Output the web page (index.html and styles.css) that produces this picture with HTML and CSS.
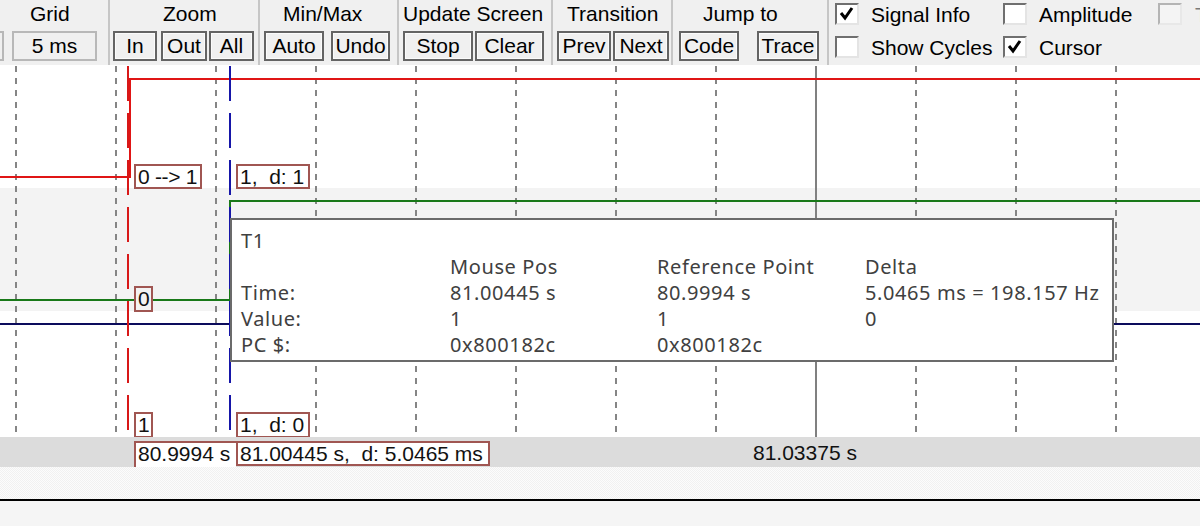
FILE: index.html
```html
<!DOCTYPE html>
<html>
<head>
<meta charset="utf-8">
<link rel="stylesheet" href="styles.css">
</head>
<body>
<div class="app">
  <div class="toolbar">
    <div class="group g-stub"><div class="stub-field"></div></div>
    <div class="group g-grid">
      <div class="glabel">Grid</div>
      <div class="gbtns"><div class="field">5 ms</div></div>
    </div>
    <div class="sep"></div>
    <div class="group g-zoom">
      <div class="glabel">Zoom</div>
      <div class="gbtns"><button class="btn b-in">In</button><button class="btn b-out">Out</button><button class="btn b-all">All</button></div>
    </div>
    <div class="sep"></div>
    <div class="group g-minmax">
      <div class="glabel">Min/Max</div>
      <div class="gbtns"><button class="btn b-auto">Auto</button><button class="btn b-undo">Undo</button></div>
    </div>
    <div class="sep"></div>
    <div class="group g-update">
      <div class="glabel">Update Screen</div>
      <div class="gbtns"><button class="btn b-stop">Stop</button><button class="btn b-clear">Clear</button></div>
    </div>
    <div class="sep"></div>
    <div class="group g-trans">
      <div class="glabel">Transition</div>
      <div class="gbtns"><button class="btn b-prev">Prev</button><button class="btn b-next">Next</button></div>
    </div>
    <div class="sep"></div>
    <div class="group g-jump">
      <div class="glabel">Jump to</div>
      <div class="gbtns"><button class="btn b-code">Code</button><button class="btn b-trace">Trace</button></div>
    </div>
    <div class="sep"></div>
    <div class="checks">
      <label class="chk"><span class="box"><svg width="20" height="18" viewBox="0 0 20 18"><polyline points="4,8 8,13 15,3" fill="none" stroke="#000" stroke-width="3"/></svg></span>Signal Info</label>
      <label class="chk"><span class="box"></span>Amplitude</label>
      <label class="chk"><span class="box box-dis"></span><span class="dis">T</span></label>
      <label class="chk"><span class="box"></span>Show Cycles</label>
      <label class="chk"><span class="box"><svg width="20" height="18" viewBox="0 0 20 18"><polyline points="4,8 8,13 15,3" fill="none" stroke="#000" stroke-width="3"/></svg></span>Cursor</label>
    </div>
  </div>

  <div class="wave">
    <div class="row r1"></div>
    <div class="row r2"></div>
    <div class="row r3"></div>
    <svg class="lines" width="1200" height="372" viewBox="0 0 1200 372">
      <g stroke="#858585" stroke-width="2" stroke-dasharray="6 6">
        <line x1="16" y1="1" x2="16" y2="372"/>
        <line x1="116" y1="1" x2="116" y2="372"/>
        <line x1="216" y1="1" x2="216" y2="372"/>
        <line x1="316" y1="1" x2="316" y2="372"/>
        <line x1="416" y1="1" x2="416" y2="372"/>
        <line x1="516" y1="1" x2="516" y2="372"/>
        <line x1="616" y1="1" x2="616" y2="372"/>
        <line x1="716" y1="1" x2="716" y2="372"/>
        <line x1="916" y1="1" x2="916" y2="372"/>
        <line x1="1016" y1="1" x2="1016" y2="372"/>
        <line x1="1116" y1="1" x2="1116" y2="372"/>
      </g>
      <line x1="816" y1="1" x2="816" y2="372" stroke="#808080" stroke-width="2"/>
      <!-- signal 1 (red) -->
      <polyline points="0,112 130,112 130,14 1200,14" fill="none" stroke="#e01515" stroke-width="2"/>
      <!-- signal 2 (green) -->
      <polyline points="0,235 230,235 230,136 1200,136" fill="none" stroke="#187818" stroke-width="2"/>
      <!-- signal 3 (navy) -->
      <line x1="0" y1="259" x2="1200" y2="259" stroke="#0c0c5c" stroke-width="2"/>
      <!-- cursors -->
      <line x1="128" y1="1" x2="128" y2="372" stroke="#d81818" stroke-width="2" stroke-dasharray="35 12"/>
      <line x1="230" y1="1" x2="230" y2="372" stroke="#1616a8" stroke-width="2" stroke-dasharray="35 12"/>
    </svg>

    <div class="lbl l-trans">0 --&gt; 1</div>
    <div class="lbl l-d1">1,&nbsp; d: 1</div>
    <div class="lbl lbl-gray l-zero">0</div>
    <div class="lbl l-one">1</div>
    <div class="lbl l-d0">1,&nbsp; d: 0</div>

    <div class="tip">
      <div class="tip-title">T1</div>
      <div class="tip-grid">
        <span></span><span>Mouse Pos</span><span>Reference Point</span><span>Delta</span>
        <span>Time:</span><span>81.00445 s</span><span>80.9994 s</span><span>5.0465 ms = 198.157 Hz</span>
        <span>Value:</span><span>1</span><span>1</span><span>0</span>
        <span>PC $:</span><span>0x800182c</span><span>0x800182c</span><span></span>
      </div>
    </div>
  </div>

  <div class="axis">
    <div class="ax ax1">80.9994 s</div>
    <div class="ax ax2">81.00445 s,&nbsp; d: 5.0465 ms</div>
    <div class="ax3">81.03375 s</div>
  </div>
  <div class="dots"></div>
  <div class="hline"></div>
  <div class="status"></div>
</div>
</body>
</html>
```
FILE: styles.css
```css
* { box-sizing: border-box; margin: 0; padding: 0; }
html, body { width: 1200px; height: 526px; overflow: hidden; }
body {
  background: #f0f0f0;
  font-family: "Liberation Sans", Arial, sans-serif;
  font-size: 21px;
  color: #000;
}
.app { display: flex; flex-direction: column; width: 1200px; height: 526px; }

/* ---------- toolbar ---------- */
.toolbar { display: flex; height: 65px; background: #f0f0f0; flex: none; }
.group { display: flex; flex-direction: column; height: 65px; flex: none; }
.glabel { height: 31px; line-height: 28px; white-space: nowrap; }
.gbtns { display: flex; height: 30px; }
.sep { width: 2px; height: 65px; background: #c6c6c6; flex: none; }

.btn {
  height: 30px;
  border: 2px solid #646464;
  box-shadow: inset 0 0 0 1px #fbfbfb;
  background: #f0f0f0;
  font: inherit;
  color: #000;
  line-height: 24px;
  text-align: center;
  padding: 0;
  flex: none;
}

.g-stub { width: 9px; }
.stub-field { width: 4px; height: 30px; margin-top: 31px; border: 2px solid #b8b8b8; border-left: none; }

.g-grid { width: 99px; }
.g-grid .glabel { padding-left: 21px; }
.field {
  width: 85px; height: 30px; margin-left: 3px;
  border: 2px solid #b8b8b8;
  text-align: center; line-height: 26px;
}

.g-zoom { width: 148px; }
.g-zoom .glabel { padding-left: 53px; }
.g-zoom .gbtns { padding-left: 3px; }
.b-in { width: 44px; }
.b-out { width: 46px; margin-left: 4px; }
.b-all { width: 45px; margin-left: 2px; }

.g-minmax { width: 137px; }
.g-minmax .glabel { padding-left: 23px; }
.g-minmax .gbtns { padding-left: 4px; }
.b-auto { width: 60px; }
.b-undo { width: 59px; margin-left: 7px; }

.g-update { width: 152px; }
.g-update .glabel { padding-left: 4px; }
.g-update .gbtns { padding-left: 4px; }
.b-stop { width: 70px; }
.b-clear { width: 69px; margin-left: 2px; }

.g-trans { width: 118px; }
.g-trans .glabel { padding-left: 14px; }
.g-trans .gbtns { padding-left: 4px; }
.b-prev { width: 54px; }
.b-next { width: 56px; margin-left: 2px; }

.g-jump { width: 154px; }
.g-jump .glabel { padding-left: 30px; }
.g-jump .gbtns { padding-left: 6px; }
.b-code { width: 60px; }
.b-trace { width: 62px; margin-left: 18px; }

.checks {
  display: grid;
  grid-template-columns: 168px 154px 60px;
  grid-auto-rows: 33px;
  padding: 3px 0 0 6px;
  flex: none;
}
.chk { display: flex; align-items: flex-start; gap: 12px; white-space: nowrap; line-height: 24px; }
.box {
  width: 24px; height: 22px; flex: none;
  background: #fff;
  border: 2px solid;
  border-color: #6f6f6f #e4e4e4 #e4e4e4 #6f6f6f;
  display: flex; align-items: center; justify-content: center;
}
.box-dis { background: #f4f4f4; border-color: #b4b4b4 #e8e8e8 #e8e8e8 #b4b4b4; margin-left: 1px; }
.dis { color: #7a7a7a; margin-left: 1px; }

/* ---------- waveform ---------- */
.wave { position: relative; height: 372px; flex: none; }
.row { width: 1200px; }
.r1 { height: 123px; background: #fff; }
.r2 { height: 123px; background: #f3f3f3; }
.r3 { height: 126px; background: #fff; }
.lines { position: absolute; left: 0; top: 0; }

.lbl {
  position: absolute;
  height: 25px;
  border: 2px solid #a05652;
  background: #fff;
  padding: 0 0 0 2px;
  line-height: 21px;
  white-space: nowrap;
  color: #111;
}
.lbl-gray { background: #f3f3f3; }
.l-trans { left: 134px; top: 99px; width: 68px; letter-spacing: -0.3px; }
.l-d1 { left: 236px; top: 99px; width: 74px; }
.l-zero { left: 134px; top: 221px; width: 19px; height: 26px; }
.l-one { left: 134px; top: 347px; width: 19px; height: 26px; }
.l-d0 { left: 236px; top: 347px; width: 74px; height: 26px; }

.tip {
  position: absolute;
  left: 230px; top: 153px;
  width: 884px; height: 144px;
  border: 2px solid #6b6b6b;
  background: #fff;
  padding: 8px 0 0 9px;
  font-family: "Noto Sans", "Open Sans", sans-serif;
  font-size: 20px;
  letter-spacing: 0.6px;
  line-height: 26px;
  color: #404040;
}
.tip-grid { display: grid; grid-template-columns: 209px 207px 208px auto; }
.tip-grid span { white-space: nowrap; height: 26px; }

/* ---------- axis & bottom ---------- */
.axis { position: relative; height: 30px; background: #dcdcdc; flex: none; }
.ax {
  position: absolute; top: 4px; height: 26px;
  background: #fff;
  border: 2px solid #a05652;
  padding-left: 2px;
  line-height: 21px;
  white-space: nowrap;
  color: #111;
}
.ax1 { left: 134px; width: 102px; border-right: none; border-bottom: none; }
.ax2 { left: 236px; width: 254px; height: 25px; }
.ax3 { position: absolute; left: 753px; top: 4px; line-height: 23px; color: #111; }

.dots {
  height: 32px; flex: none;
  background: repeating-conic-gradient(#f1f1f1 0 25%, #fcfcfc 0 50%) 0 0 / 2px 2px;
}
.hline { height: 2px; background: #000; flex: none; }
.status { flex: 1; background: #f5f5f5; }
```
